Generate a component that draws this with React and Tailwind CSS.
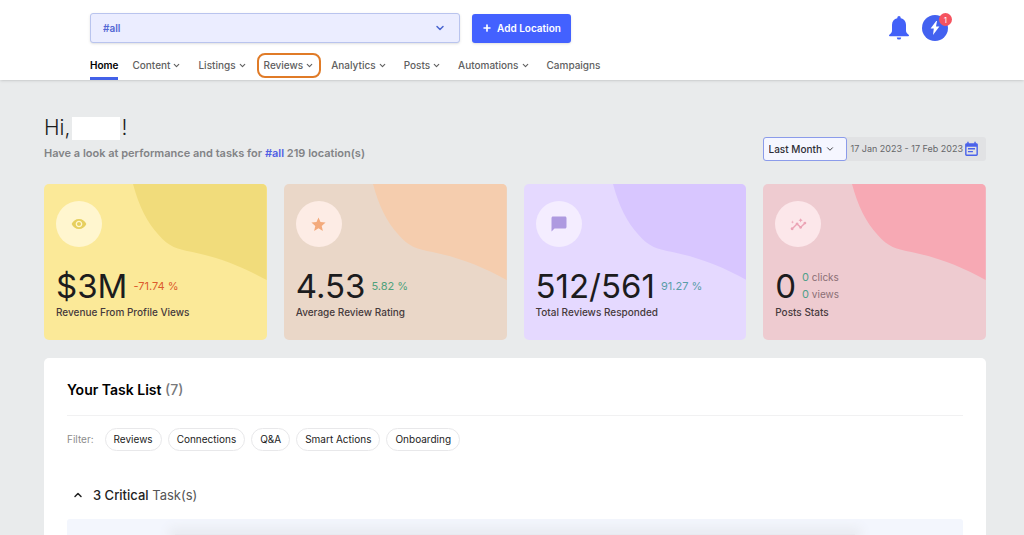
import { useState } from "react";
import { ChevronDown, ChevronUp, Plus } from "lucide-react";
import { MdChatBubble, MdEventNote, MdInsights, MdRemoveRedEye, MdStar } from "react-icons/md";

const navItems = [
  { label: "Content", menu: true },
  { label: "Listings", menu: true },
  { label: "Reviews", menu: true, highlighted: true },
  { label: "Analytics", menu: true },
  { label: "Posts", menu: true },
  { label: "Automations", menu: true },
  { label: "Campaigns" },
];

const filters = ["Reviews", "Connections", "Q&A", "Smart Actions", "Onboarding"];

export default function App() {
  return (
    <div className="flex min-h-screen flex-col bg-[#e9ebec] font-['Inter',sans-serif] text-[#1c1c1e]">
      <Header />
      <main className="flex flex-1 flex-col pr-[38px] pl-11">
        <div className="flex items-end justify-between pt-9 pb-[23px]">
          <Greeting />
          <DateRange />
        </div>
        <section className="grid grid-cols-4 gap-[17px]">
          <StatCard
            className="bg-[#fbe998]"
            blob="fill-[#f1dc7b]"
            circle="bg-[#fff6cf]"
            icon={<MdRemoveRedEye size={16} className="text-[#e6cf5e]" />}
            value="$3M"
            label="Revenue From Profile Views"
          >
            <span className="text-[11px] text-[#dc5a2c]">-71.74 %</span>
          </StatCard>
          <StatCard
            className="bg-[#ead7c8]"
            blob="fill-[#f5cdae]"
            circle="bg-[#fdece5]"
            icon={<MdStar size={17} className="text-[#f3aa7c]" />}
            value="4.53"
            label="Average Review Rating"
          >
            <span className="text-[11px] text-[#4fa27c]">5.82 %</span>
          </StatCard>
          <StatCard
            className="bg-[#e5d9ff]"
            blob="fill-[#d8c6ff]"
            circle="bg-[#f4edff]"
            icon={<MdChatBubble size={18} className="text-[#ae9ae0]" />}
            value="512/561"
            label="Total Reviews Responded"
          >
            <span className="text-[11px] text-[#5a9da8]">91.27 %</span>
          </StatCard>
          <StatCard
            className="bg-[#eecbd0]"
            blob="fill-[#f7a9b4]"
            circle="bg-[#fce7ea]"
            icon={<MdInsights size={17} className="text-[#eba3b5]" />}
            value="0"
            label="Posts Stats"
          >
            <span className="flex flex-col text-[10px] leading-[17px] text-[#8b6f75]">
              <span><span className="text-[11px] text-[#4fa08a]">0</span> clicks</span>
              <span><span className="text-[11px] text-[#4fa08a]">0</span> views</span>
            </span>
          </StatCard>
        </section>
        <TaskList />
      </main>
    </div>
  );
}

function Header() {
  return (
    <header className="bg-white pr-[76px] pl-[90px] shadow-sm">
      <div className="flex items-center pt-[13px]">
        <div className="relative w-[370px]">
          <select
            aria-label="Location"
            className="block h-[30px] w-full appearance-none rounded-[3px] border border-[#b9c4ee] bg-[#ebedff] px-3 text-[10px] font-semibold text-[#5468d4] shadow-sm"
          >
            <option>#all</option>
          </select>
          <ChevronDown size={12} strokeWidth={3} className="pointer-events-none absolute top-[9px] right-[14px] text-[#4a66d0]" />
        </div>
        <button className="ml-3 flex h-[29px] w-[99px] items-center justify-center gap-[5px] rounded-[3px] bg-[#4361ff] text-[10px] font-semibold whitespace-nowrap text-white shadow-sm">
          <Plus size={10} strokeWidth={4} />
          Add Location
        </button>
        <div className="ml-auto flex items-center gap-[13px]">
          <button aria-label="Notifications" className="text-[#4361f8]">
            <BellIcon />
          </button>
          <button aria-label="Quick actions" className="relative flex size-[26px] items-center justify-center rounded-full bg-[#4361f0]">
            <svg viewBox="0 0 10 14" className="h-[14px] w-[10px] fill-white">
              <path d="M6.2 0 0.6 7.6h3.2L3 14l6.4-8.4H6L7 0z" />
            </svg>
            <span className="absolute -top-[2px] -right-[4px] flex size-[13px] items-center justify-center rounded-full bg-[#f5535f] text-[8px] text-white">
              1
            </span>
          </button>
        </div>
      </div>
      <nav className="mt-[7px] flex h-[30px] items-center gap-[17px] text-[10px] font-medium text-[#606060]">
        <a href="#home" className="-mr-[3px] flex h-full items-center border-b-3 border-[#4361e8] pt-[3px] font-semibold text-black">
          Home
        </a>
        {navItems.map((item) => (
          <a
            key={item.label}
            href={`#${item.label.toLowerCase()}`}
            className={
              item.highlighted
                ? "-mx-[7px] flex h-[25px] items-center gap-[2px] rounded-lg border-2 border-[#e07b27] px-[5px]"
                : "flex items-center gap-[2px]"
            }
          >
            {item.label}
            {item.menu && <ChevronDown size={9} strokeWidth={3} />}
          </a>
        ))}
      </nav>
    </header>
  );
}

function BellIcon() {
  return (
    <svg viewBox="0 0 20 24" className="h-6 w-5 fill-current">
      <path d="M10 0a1.7 1.7 0 0 0-1.7 1.7v.6C5 3 3 5.600 3 9v5.500c0 1.800-.9 3-2.600 4.200-.7.600-.4 1.500.4 1.500h18.400c.8 0 1.100-.9.400-1.500C17.900 17.500 17 16.300 17 14.500V9c0-3.400-2-6-5.300-6.700v-.6A1.700 1.700 0 0 0 10 0z" />
      <path d="M7.800 21.400h4.400a2.200 2.200 0 0 1-4.400 0z" />
    </svg>
  );
}

function Greeting() {
  return (
    <div>
      <h1 className="flex items-center text-[21px] leading-6 font-light">
        Hi,
        <span className="mr-px ml-[2px] h-[23px] w-12 bg-white" />!
      </h1>
      <p className="mt-[5px] text-[11px] leading-4 font-semibold text-[#828386]">
        Have a look at performance and tasks for <a href="#all" className="text-[#4f60e4]">#all</a> 219 location(s)
      </p>
    </div>
  );
}

function DateRange() {
  return (
    <div className="flex h-6 items-center rounded-[3px] bg-[#e1e2e4]">
      <div className="relative">
        <select
          aria-label="Period"
          className="block h-6 w-[84px] appearance-none rounded-[3px] border border-[#8b9bea] bg-[#f5f6ff] pl-[5px] text-[10px] font-medium text-[#2d2d35]"
        >
          <option>Last Month</option>
        </select>
        <ChevronDown size={10} strokeWidth={2} className="pointer-events-none absolute top-[7px] right-3" />
      </div>
      <button className="flex items-center pr-[6px] pl-1 text-[9px] whitespace-nowrap text-[#66676a]">
        17 Jan 2023 - 17 Feb 2023
        <MdEventNote size={17} className="text-[#4a62ea]" />
      </button>
    </div>
  );
}

function StatCard({ className, blob, circle, icon, value, label, children }) {
  return (
    <article className={`relative h-[156px] overflow-hidden rounded-[5px] px-3 pt-[17px] ${className}`}>
      <svg viewBox="0 0 135 96" preserveAspectRatio="none" className={`absolute top-0 right-0 h-24 w-3/5 ${blob}`}>
        <path d="M0 0C6 22 14 38 26 51C36 63 45 65 60 68C89 74 111 83 135 96V0Z" />
      </svg>
      <div className={`relative flex size-[46px] items-center justify-center rounded-full ${circle}`}>{icon}</div>
      <div className="relative mt-5 flex h-[38px] items-center gap-[6px]">
        <span className="text-[33px] leading-[38px]">{value}</span>
        {children}
      </div>
      <h2 className="relative text-[10px] leading-[14px] font-medium text-[#463a3c]">{label}</h2>
    </article>
  );
}

function TaskList() {
  const [open, setOpen] = useState(true);
  const [selected, setSelected] = useState("");

  return (
    <section className="mt-[18px] flex flex-1 flex-col rounded-t-[5px] bg-white px-[23px] pt-[22px]">
      <h2 className="border-b border-[#f1f1f2] pb-[15px] text-sm leading-5 font-semibold text-black">
        Your Task List <span className="font-medium text-[#77787b]">(7)</span>
      </h2>
      <div className="mt-3 flex items-center gap-[6px] text-[10px]">
        <span className="mr-[5px] text-[#8c8c8c]">Filter:</span>
        {filters.map((name) => (
          <button
            key={name}
            onClick={() => setSelected(name)}
            className={`h-[23px] rounded-full border px-2 text-[#222222] ${selected === name ? "border-[#4361ff]" : "border-[#e8e8ea]"}`}
          >
            {name}
          </button>
        ))}
      </div>
      <button onClick={() => setOpen(!open)} className="mt-[34px] flex items-center gap-[9px] pl-[5px] text-[13px] leading-5 text-[#555555]">
        <ChevronUp size={12} strokeWidth={3} className="text-[#222222]" />
        <span><span className="font-medium text-[#222222]">3 Critical</span> Task(s)</span>
      </button>
      {open && (
        <div className="mt-[14px] flex min-h-[15px] flex-1 items-end overflow-hidden rounded-t-[3px] bg-[#f3f6fd] pr-[12%] pl-[12%]">
          <div className="h-px w-full bg-[#e8eaf0] shadow-[0_0_12px_6px_#e8eaf0]" />
        </div>
      )}
    </section>
  );
}
